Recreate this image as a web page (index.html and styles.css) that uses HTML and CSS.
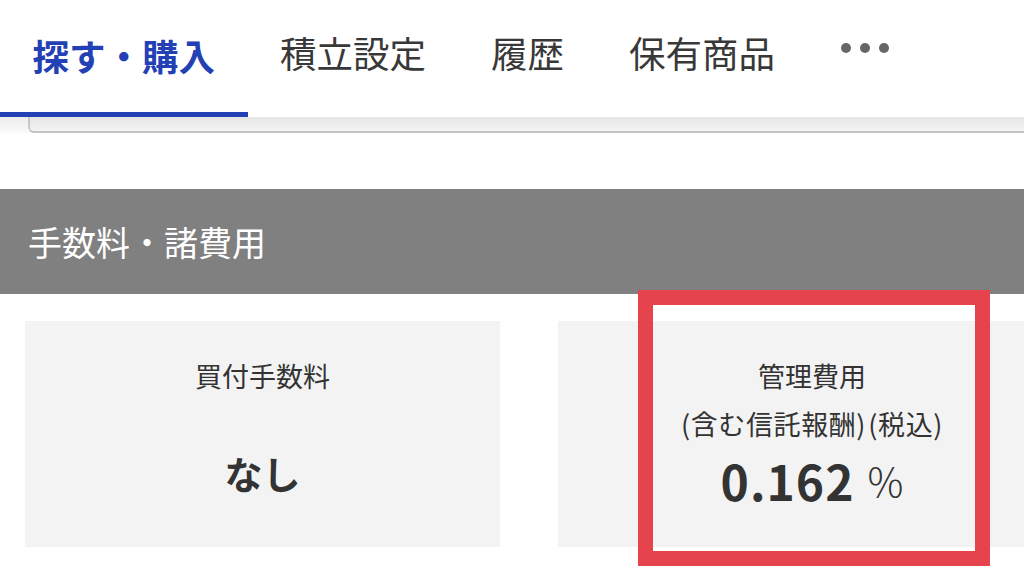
FILE: index.html
```html
<!DOCTYPE html>
<html lang="ja">
<head>
<meta charset="utf-8">
<title>手数料・諸費用</title>
<link rel="stylesheet" href="styles.css">
</head>
<body>
<div class="page">
  <nav class="nav">
    <div class="tab active">探す・購入</div>
    <div class="tab">積立設定</div>
    <div class="tab">履歴</div>
    <div class="tab">保有商品</div>
    <div class="tab more" aria-label="その他"><span class="dot"></span><span class="dot"></span><span class="dot"></span></div>
  </nav>
  <div class="shade"><div class="search-box"></div></div>
  <section class="fees">
    <h2 class="section-title">手数料・諸費用</h2>
    <div class="cards">
      <div class="card">
        <div class="card-title">買付手数料</div>
        <div class="card-value kana">なし</div>
      </div>
      <div class="card wide">
        <div class="card-title">管理費用<br><span class="sub">(含む信託報酬)&#8202;(税込)</span></div>
        <div class="card-value"><span class="num">0.162</span><span class="unit">%</span></div>
      </div>
    </div>
  </section>
  <div class="highlight"></div>
</div>
</body>
</html>
```

FILE: styles.css
```css
* { box-sizing: border-box; }
html, body {
  margin: 0;
  padding: 0;
  background: #fff;
}
body {
  width: 1024px;
  height: 578px;
  overflow: hidden;
  font-family: "Noto Sans CJK JP", "Noto Sans", sans-serif;
  color: #333;
}
.page {
  position: relative;
  width: 1024px;
  height: 578px;
  overflow: hidden;
}
.nav {
  position: relative;
  z-index: 2;
  display: flex;
  height: 117px;
  background: #fff;
}
.tab {
  display: flex;
  align-items: center;
  padding: 0 32.5px 5px;
  font-size: 36.5px;
  line-height: 1;
  color: #383838;
  white-space: nowrap;
  border-bottom: 5px solid transparent;
}
.tab.active {
  color: #2340b4;
  font-weight: 700;
  border-bottom-color: #2340b4;
  padding-bottom: 0;
}
.tab.more {
  gap: 9px;
  padding-top: 0;
  padding-bottom: 16px;
  padding-left: 33px;
}
.dot {
  width: 10px;
  height: 10px;
  border-radius: 50%;
  background: #666;
}
.shade {
  height: 16px;
  background: linear-gradient(#ececec, #fbfbfb);
}
.search-box {
  margin-left: 28px;
  height: 16px;
  border-left: 2px solid #c8c8c8;
  border-bottom: 2px solid #c4c4c4;
  border-bottom-left-radius: 6px;
  background: linear-gradient(#e5e5e5, #f4f4f4);
}
.fees {
  margin-top: 56px;
}
.section-title {
  margin: 0;
  height: 105px;
  display: flex;
  align-items: center;
  padding-left: 28px;
  background: #808080;
  color: #fff;
  font-size: 34px;
  font-weight: 400;
}
.cards {
  display: flex;
  gap: 58px;
  padding: 27px 0 0 25px;
}
.card {
  flex: 0 0 475px;
  height: 226px;
  background: #f3f3f3;
  display: flex;
  flex-direction: column;
  align-items: center;
  padding-top: 31px;
}
.card.wide {
  flex-basis: 508px;
}
.card-title {
  height: 96px;
  font-size: 27px;
  line-height: 48px;
  text-align: center;
  color: #333;
}
.sub {
  letter-spacing: 0.6px;
}
.card-value {
  margin-top: 4px;
  height: 56px;
  display: flex;
  align-items: center;
  font-weight: 700;
  color: #333;
}
.card-value.kana {
  font-size: 38px;
  margin-top: -4px;
}
.num {
  font-size: 48px;
  letter-spacing: 1px;
}
.unit {
  font-size: 40px;
  font-weight: 300;
  margin-left: 13px;
}
.highlight {
  position: absolute;
  left: 638px;
  top: 290px;
  width: 352px;
  height: 276px;
  border: 15px solid #e5444c;
  z-index: 3;
}
```
